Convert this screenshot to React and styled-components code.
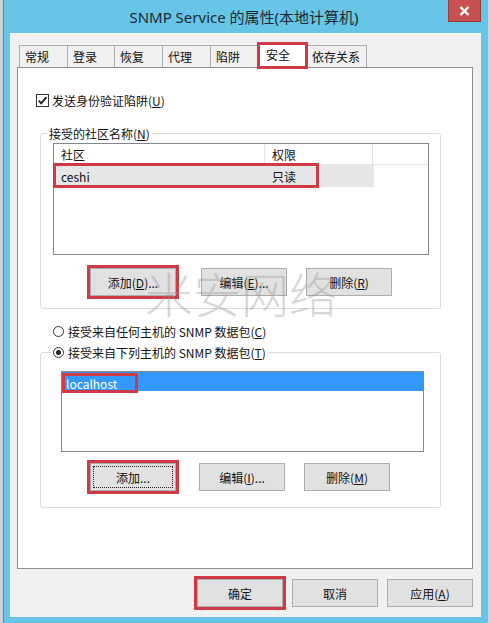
import React from 'react';
import styled, { createGlobalStyle } from 'styled-components';

const GlobalStyle = createGlobalStyle`
  html, body {
    margin: 0;
    padding: 0;
    background: #cdd4d8;
  }
  body {
    font-family: "Noto Sans CJK SC", "Noto Sans", sans-serif;
    font-size: 12px;
    color: #111;
  }
`;

const Window = styled.div`
  position: relative;
  box-sizing: border-box;
  width: 485px;
  height: 623px;
  margin-left: 3px;
  background: #67c6e8;
  border-left: 1px solid #3d95bd;
  display: flex;
  flex-direction: column;
  padding: 0 7px 6px 6px;
`;

const TitleBar = styled.div`
  height: 33px;
  flex: none;
  display: grid;
  grid-template-columns: 1fr auto 1fr;
`;

const Title = styled.div`
  grid-column: 2;
  align-self: center;
  font-family: "Noto Sans", "Noto Sans CJK SC", sans-serif;
  font-size: 15px;
  color: #1d2a33;
  white-space: nowrap;
  margin-right: 3px;
`;

const CloseButton = styled.div`
  grid-column: 3;
  justify-self: end;
  box-sizing: border-box;
  width: 33px;
  height: 22px;
  background: #c75050;
  border: 1px solid #9c3a3a;
  border-top: none;
  display: flex;
  align-items: center;
  justify-content: center;
`;

const Client = styled.div`
  flex: 1;
  background: #f0f0f0;
  display: flex;
  flex-direction: column;
  padding: 9px 8px 10px 7px;
`;

const TabStrip = styled.div`
  display: flex;
  align-items: flex-end;
  height: 25px;
  padding-left: 2px;
  flex: none;
`;

const Tab = styled.div`
  box-sizing: border-box;
  width: ${p => p.$w}px;
  height: 22px;
  padding-left: 5px;
  display: flex;
  align-items: center;
  background: #f0f0f0;
  border: 1px solid #acacac;
  border-bottom: none;
  border-right: ${p => (p.$last ? '1px solid #acacac' : 'none')};
  white-space: nowrap;
`;

const ActiveTab = styled.div`
  position: relative;
  z-index: 2;
  box-sizing: border-box;
  width: 51px;
  height: 27px;
  margin: 0 -2px -2px -2px;
  padding: 0 0 2px 6px;
  display: flex;
  align-items: center;
  background: #fff;
  border: 3px solid #cf3b45;
`;

const Panel = styled.div`
  flex: 1;
  background: #fff;
  border: 1px solid #8e8f8f;
  padding: 0 0 0 22px;
  display: flex;
  flex-direction: column;
`;

const CheckRow = styled.div`
  display: flex;
  align-items: center;
  gap: 3px;
  height: 16px;
  margin: 24px 0 0 -4px;
`;

const CheckBox = styled.div`
  box-sizing: border-box;
  width: 13px;
  height: 13px;
  border: 1px solid #333;
  background: #fff;
  display: flex;
  align-items: center;
  justify-content: center;
`;

const GroupBox = styled.div`
  box-sizing: border-box;
  width: 401px;
  margin-top: ${p => p.$top}px;
  border: 1px solid #dcdcdc;
  border-radius: 3px;
  padding: 0 11px ${p => p.$bottom}px 12px;
  display: flex;
  flex-direction: column;
`;

const Legend = styled.div`
  align-self: flex-start;
  display: flex;
  align-items: center;
  gap: 4px;
  height: 16px;
  margin: -9px 0 0 ${p => p.$left}px;
  padding: 0 2px 0 1px;
  background: #fff;
  white-space: nowrap;
`;

const ListView = styled.div`
  box-sizing: border-box;
  height: 112px;
  margin-top: 2px;
  border: 1px solid #828790;
  background: #fff;
`;

const HeaderRow = styled.div`
  display: grid;
  grid-template-columns: 211px 108px;
  height: 20px;
  border-bottom: 1px solid #e5e5e5;
`;

const HeaderCell = styled.div`
  display: flex;
  align-items: center;
  padding-left: 7px;
  border-right: 1px solid #e5e5e5;
`;

const ItemRow = styled.div`
  position: relative;
  display: grid;
  grid-template-columns: 211px 108px;
  width: 320px;
  height: 22px;
  background: #e6e6e6;
`;

const Cell = styled.div`
  display: flex;
  align-items: center;
  padding-left: 7px;
`;

const RowMark = styled.div`
  position: absolute;
  left: -1px;
  top: -2px;
  width: 266px;
  height: 25px;
  box-sizing: border-box;
  border: 3px solid #cf3b45;
`;

const ButtonRow = styled.div`
  display: flex;
  gap: 19px;
  margin-top: ${p => p.$top}px;
  padding-left: 37px;
`;

const Button = styled.div`
  position: relative;
  box-sizing: border-box;
  width: 86px;
  height: 28px;
  margin-right: ${p => p.$extra || 0}px;
  background: #e1e1e1;
  border: 1px solid #adadad;
  display: flex;
  align-items: center;
  justify-content: center;
  white-space: nowrap;
  outline: ${p => (p.$marked ? '3px solid #cf3b45' : 'none')};
  &::after {
    content: '';
    display: ${p => (p.$focus ? 'block' : 'none')};
    position: absolute;
    inset: 2px;
    border: 1px dotted #222;
  }
`;

const RadioRow = styled.div`
  display: flex;
  align-items: center;
  gap: 4px;
  height: 16px;
  margin: 14px 0 0 13px;
`;

const Radio = styled.div`
  box-sizing: border-box;
  width: 11px;
  height: 11px;
  border-radius: 50%;
  border: 1px solid #333;
  background: #fff;
  display: flex;
  align-items: center;
  justify-content: center;
  &::after {
    content: '';
    display: ${p => (p.$on ? 'block' : 'none')};
    width: 5px;
    height: 5px;
    border-radius: 50%;
    background: #222;
  }
`;

const ListBox = styled.div`
  box-sizing: border-box;
  width: 363px;
  height: 81px;
  margin: 11px 0 0 8px;
  border: 1px solid #828790;
  background: #fff;
`;

const SelectedItem = styled.div`
  height: 19px;
  background: #3399ff;
  color: #fff;
  display: flex;
  align-items: flex-start;
`;

const TextMark = styled.span`
  box-sizing: border-box;
  width: 76px;
  height: 20px;
  margin-top: 1px;
  padding-left: 1px;
  border: 3px solid #cf3b45;
  display: flex;
  align-items: center;
`;

const Footer = styled.div`
  display: flex;
  justify-content: flex-end;
  gap: 9px;
  margin-top: 10px;
  flex: none;
`;

const Watermark = styled.div`
  position: absolute;
  left: 141px;
  top: 268px;
  font-family: "Noto Sans CJK SC", sans-serif;
  font-weight: 300;
  font-size: 48px;
  line-height: 1;
  color: rgba(150, 150, 150, 0.38);
  pointer-events: none;
  white-space: nowrap;
`;

const U = styled.span`
  text-decoration: underline;
`;

const tabs = [
  { label: '常规', w: 48 },
  { label: '登录', w: 47 },
  { label: '恢复', w: 48 },
  { label: '代理', w: 48 },
  { label: '陷阱', w: 49 },
];

export default function App() {
  return (
    <>
      <GlobalStyle />
      <Window>
        <TitleBar>
          <Title>SNMP Service 的属性(本地计算机)</Title>
          <CloseButton>
            <svg width="11" height="10" viewBox="0 0 11 10">
              <path d="M1.5 1 L9.5 9 M9.5 1 L1.5 9" stroke="#fff" strokeWidth="2.4" />
            </svg>
          </CloseButton>
        </TitleBar>
        <Client>
          <TabStrip>
            {tabs.map(t => (
              <Tab key={t.label} $w={t.w}>{t.label}</Tab>
            ))}
            <ActiveTab>安全</ActiveTab>
            <Tab $w={61} $last>依存关系</Tab>
          </TabStrip>
          <Panel>
            <CheckRow>
              <CheckBox>
                <svg width="11" height="11" viewBox="0 0 11 11">
                  <polyline points="1.8,5.6 4.3,8.4 9.4,2.2" fill="none" stroke="#222" strokeWidth="1.9" />
                </svg>
              </CheckBox>
              <span>发送身份验证陷阱(<U>U</U>)</span>
            </CheckRow>

            <GroupBox $top={25} $bottom={12}>
              <Legend $left={-5}>
                <span>接受的社区名称(<U>N</U>)</span>
              </Legend>
              <ListView>
                <HeaderRow>
                  <HeaderCell>社区</HeaderCell>
                  <HeaderCell>权限</HeaderCell>
                </HeaderRow>
                <ItemRow>
                  <Cell>ceshi</Cell>
                  <Cell>只读</Cell>
                  <RowMark />
                </ItemRow>
              </ListView>
              <ButtonRow $top={13}>
                <Button $marked $extra={6}><span>添加(<U>D</U>)...</span></Button>
                <Button><span>编辑(<U>E</U>)...</span></Button>
                <Button><span>删除(<U>R</U>)</span></Button>
              </ButtonRow>
            </GroupBox>

            <RadioRow>
              <Radio />
              <span>接受来自任何主机的 SNMP 数据包(<U>C</U>)</span>
            </RadioRow>

            <GroupBox $top={13} $bottom={16}>
              <Legend $left={-1}>
                <Radio $on />
                <span>接受来自下列主机的 SNMP 数据包(<U>T</U>)</span>
              </Legend>
              <ListBox>
                <SelectedItem>
                  <TextMark>localhost</TextMark>
                </SelectedItem>
              </ListBox>
              <ButtonRow $top={11}>
                <Button $marked $focus $extra={4}>添加...</Button>
                <Button><span>编辑(<U>I</U>)...</span></Button>
                <Button><span>删除(<U>M</U>)</span></Button>
              </ButtonRow>
            </GroupBox>
          </Panel>
          <Footer>
            <Button $marked>确定</Button>
            <Button>取消</Button>
            <Button><span>应用(<U>A</U>)</span></Button>
          </Footer>
        </Client>
        <Watermark>米安网络</Watermark>
      </Window>
    </>
  );
}
